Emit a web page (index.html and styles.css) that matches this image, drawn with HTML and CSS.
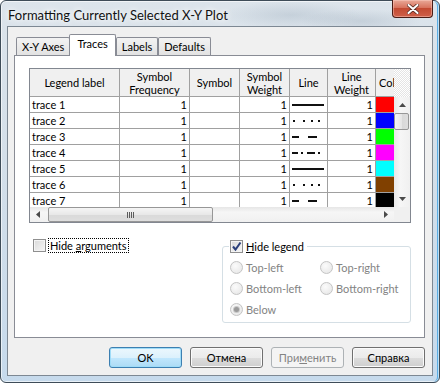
FILE: index.html
```html
<!DOCTYPE html>
<html>
<head>
<meta charset="utf-8">
<title>Formatting Currently Selected X-Y Plot</title>
<link rel="stylesheet" href="styles.css">
</head>
<body>
<div class="window">
  <div class="titlebar">
    <span class="title">Formatting Currently Selected X-Y Plot</span>
    <div class="close">
      <svg width="12" height="10" viewBox="0 0 12 10">
        <path d="M1.5 1 L10.5 9 M10.5 1 L1.5 9" stroke="#5a2a22" stroke-width="3.6" stroke-linecap="round"/>
        <path d="M1.5 1 L10.5 9 M10.5 1 L1.5 9" stroke="#fff" stroke-width="2" stroke-linecap="round"/>
      </svg>
    </div>
  </div>

  <div class="client">
    <div class="tabs">
      <div class="tab">X-Y Axes</div>
      <div class="tab active">Traces</div>
      <div class="tab">Labels</div>
      <div class="tab">Defaults</div>
    </div>

    <div class="page">
      <div class="grid">
        <div class="grid-main">
          <div class="grid-view">
            <table class="traces">
              <colgroup>
                <col style="width:90px"><col style="width:70px"><col style="width:50px"><col style="width:50px">
                <col style="width:38px"><col style="width:48px"><col style="width:60px">
              </colgroup>
              <thead>
                <tr>
                  <th>Legend label</th>
                  <th>Symbol<br>Frequency</th>
                  <th>Symbol</th>
                  <th>Symbol<br>Weight</th>
                  <th>Line</th>
                  <th>Line<br>Weight</th>
                  <th class="col-head">Col</th>
                </tr>
              </thead>
              <tbody>
                <tr>
                  <td>trace 1</td><td class="num">1</td><td></td><td class="num">1</td>
                  <td class="line"><svg width="34" height="2"><rect width="32" height="2"/></svg></td>
                  <td class="num">1</td><td class="swatch red"></td>
                </tr>
                <tr>
                  <td>trace 2</td><td class="num">1</td><td></td><td class="num">1</td>
                  <td class="line"><svg width="34" height="2"><rect x="1" width="2" height="2"/><rect x="11" width="2" height="2"/><rect x="19" width="2" height="2"/><rect x="26" width="2" height="2"/></svg></td>
                  <td class="num">1</td><td class="swatch blue"></td>
                </tr>
                <tr>
                  <td>trace 3</td><td class="num">1</td><td></td><td class="num">1</td>
                  <td class="line"><svg width="34" height="2"><rect width="7" height="2"/><rect x="16" width="9" height="2"/></svg></td>
                  <td class="num">1</td><td class="swatch green"></td>
                </tr>
                <tr>
                  <td>trace 4</td><td class="num">1</td><td></td><td class="num">1</td>
                  <td class="line"><svg width="34" height="2"><rect width="6" height="2"/><rect x="9" width="2" height="2"/><rect x="15" width="8" height="2"/><rect x="26" width="2" height="2"/></svg></td>
                  <td class="num">1</td><td class="swatch magenta"></td>
                </tr>
                <tr>
                  <td>trace 5</td><td class="num">1</td><td></td><td class="num">1</td>
                  <td class="line"><svg width="34" height="2"><rect width="32" height="2"/></svg></td>
                  <td class="num">1</td><td class="swatch cyan"></td>
                </tr>
                <tr>
                  <td>trace 6</td><td class="num">1</td><td></td><td class="num">1</td>
                  <td class="line"><svg width="34" height="2"><rect x="1" width="2" height="2"/><rect x="11" width="2" height="2"/><rect x="19" width="2" height="2"/><rect x="26" width="2" height="2"/></svg></td>
                  <td class="num">1</td><td class="swatch brown"></td>
                </tr>
                <tr>
                  <td>trace 7</td><td class="num">1</td><td></td><td class="num">1</td>
                  <td class="line"><svg width="34" height="2"><rect width="7" height="2"/><rect x="16" width="9" height="2"/></svg></td>
                  <td class="num">1</td><td class="swatch black"></td>
                </tr>
              </tbody>
            </table>
          </div>
          <div class="vscroll">
            <div class="vs-head"></div>
            <div class="sb-btn"><svg width="7" height="4"><polygon points="0,4 7,4 3.5,0"/></svg></div>
            <div class="vs-thumb"></div>
            <div class="vs-track"></div>
            <div class="sb-btn"><svg width="7" height="4"><polygon points="0,0 7,0 3.5,4"/></svg></div>
          </div>
        </div>
        <div class="grid-foot">
          <div class="hscroll">
            <div class="sb-btn"><svg width="4" height="7"><polygon points="4,0 4,7 0,3.5"/></svg></div>
            <div class="hs-thumb"><span class="grip"></span></div>
            <div class="hs-track"></div>
            <div class="sb-btn"><svg width="4" height="7"><polygon points="0,0 0,7 4,3.5"/></svg></div>
          </div>
          <div class="corner"></div>
        </div>
      </div>

      <div class="options">
        <label class="check args">
          <span class="box"></span>
          <span class="focus">Hide <u>a</u>rguments</span>
        </label>
        <fieldset class="group">
          <legend>
            <label class="check">
              <span class="box">
                <svg width="11" height="11" viewBox="0 0 11 11"><path d="M2 5.5 L4.5 8.5 L9.5 1.5" fill="none" stroke="#2b3f7a" stroke-width="2"/></svg>
              </span>
              <span><u>H</u>ide legend</span>
            </label>
          </legend>
          <div class="radios">
            <label class="radio"><span class="dot"></span>Top-left</label>
            <label class="radio"><span class="dot"></span>Top-right</label>
            <label class="radio"><span class="dot"></span>Bottom-left</label>
            <label class="radio"><span class="dot"></span>Bottom-right</label>
            <label class="radio"><span class="dot on"></span>Below</label>
          </div>
        </fieldset>
      </div>
    </div>

    <div class="buttons">
      <button class="btn default">OK</button>
      <button class="btn">Отмена</button>
      <button class="btn" disabled>При<u>м</u>енить</button>
      <button class="btn">Справка</button>
    </div>
  </div>
</div>
</body>
</html>
```

FILE: styles.css
```css
body {
    margin: 0;
    font-family: Lato, "Open Sans", "Noto Sans", sans-serif;
    font-size: 11px;
    color: #000;
    background: #fff;
}

.window {
    box-sizing: border-box;
    width: 440px;
    height: 383px;
    display: flex;
    flex-direction: column;
    padding: 0 6px 6px;
    border: 1px solid #3e4c58;
    border-radius: 6px;
    background:
        radial-gradient(ellipse 70px 14px at 290px 14px, rgba(120, 140, 160, .22), transparent),
        radial-gradient(ellipse 60px 12px at 360px 20px, rgba(110, 130, 150, .2), transparent),
        linear-gradient(#dce4eb, #d4dfe9 40%, #c6daec 100%);
    box-shadow: inset 0 0 0 1px rgba(255, 255, 255, .6), inset -2px 0 0 #5aaee6;
}

/* title bar */
.titlebar {
    height: 25px;
    display: flex;
    align-items: center;
}
.title {
    font-size: 13px;
    margin: 3px 0 0 1px;
    color: #111;
    text-shadow: 0 0 5px #fff, 0 0 8px #fff;
}
.close {
    margin-left: auto;
    align-self: flex-start;
    box-sizing: border-box;
    width: 41px;
    height: 18px;
    margin-top: -1px;
    border: 1px solid #4a1c15;
    border-top: none;
    border-radius: 0 0 4px 4px;
    background: linear-gradient(#e9a998, #d8735e 45%, #c34a32 50%, #cf6049);
    box-shadow: inset 0 0 0 1px rgba(255, 210, 200, .45);
    display: flex;
    align-items: center;
    justify-content: center;
}

/* client area */
.client {
    flex: 1;
    display: flex;
    flex-direction: column;
    background: #f0f0f0;
    border: 1px solid #7d8893;
    padding: 7px 7px 0 6px;
}

.tabs {
    display: flex;
    align-items: flex-end;
    height: 21px;
    padding-left: 2px;
    position: relative;
    z-index: 1;
}
.tab {
    box-sizing: border-box;
    height: 18px;
    padding: 1px 5px 0;
    line-height: 16px;
    border: 1px solid #898c95;
    border-bottom: none;
    border-radius: 2px 2px 0 0;
    background: linear-gradient(#f3f3f3, #e2e2e2);
}
.tab.active {
    height: 22px;
    margin: 0 0 -1px -1px;
    padding: 1px 7px 0;
    background: #fff;
    border-color: #898c95;
}

.page {
    box-sizing: border-box;
    height: 283px;
    border: 1px solid #898c95;
    background: #fff;
    padding: 12px 13px 0 14px;
}

/* data grid */
.grid {
    box-sizing: border-box;
    width: 382px;
    height: 155px;
    border: 1px solid #828790;
}
.grid-main {
    display: flex;
    height: 138px;
}
.grid-view {
    width: 364px;
    overflow: hidden;
}
.traces {
    width: 406px;
    table-layout: fixed;
    border-spacing: 0;
}
.traces th {
    height: 27px;
    padding: 0;
    line-height: 13px;
    font-weight: normal;
    background: #f0f0f0;
    border-right: 1px solid #a0a0a0;
    border-bottom: 1px solid #a0a0a0;
    white-space: nowrap;
}
.traces th.col-head {
    text-align: left;
    padding-left: 3px;
}
.traces td {
    height: 15px;
    padding: 0 2px;
    line-height: 15px;
    border-right: 1px solid #a0a0a0;
    border-bottom: 1px solid #a0a0a0;
    white-space: nowrap;
    overflow: hidden;
}
.traces td.num {
    text-align: right;
}
.traces td.line svg {
    display: block;
    fill: #111;
}
.traces td.swatch {
    padding: 0;
}
.red { background: #ff0000; }
.blue { background: #0000ff; }
.green { background: #00ff00; }
.magenta { background: #ff00ff; }
.cyan { background: #00ffff; }
.brown { background: #804000; }
.black { background: #000; }

/* scroll bars */
.vscroll {
    width: 16px;
    display: flex;
    flex-direction: column;
    background: linear-gradient(to right, #e8e8e8, #f6f6f6 40%, #f0f0f0);
}
.vs-head {
    height: 28px;
    background: repeating-conic-gradient(#fff 0 25%, #e4e4e4 0 50%) 0 0 / 2px 2px;
}
.sb-btn {
    flex: none;
    width: 16px;
    height: 16px;
    display: flex;
    align-items: center;
    justify-content: center;
    fill: #4a4a4a;
}
.vs-thumb {
    box-sizing: border-box;
    height: 17px;
    margin: 0 1px 0 0;
    border: 1px solid #979797;
    border-radius: 2px;
    background: linear-gradient(to right, #f5f5f5, #e6e6e6 50%, #d8d8d8 51%, #dedede);
}
.vs-track {
    flex: 1;
}

.grid-foot {
    display: flex;
    height: 15px;
}
.hscroll {
    width: 364px;
    display: flex;
    align-items: center;
    background: linear-gradient(#e6e6e6, #f6f6f6 35%, #f0f0f0);
}
.hscroll .sb-btn {
    height: 15px;
}
.hs-thumb {
    box-sizing: border-box;
    width: 165px;
    height: 15px;
    margin-left: 2px;
    border: 1px solid #979797;
    border-radius: 2px;
    background: linear-gradient(#f5f5f5, #e8e8e8 50%, #d9d9d9 51%, #dedede);
    display: flex;
    align-items: center;
    justify-content: center;
}
.grip {
    width: 7px;
    height: 6px;
    background: repeating-linear-gradient(to right, #5c5c5c 0 1px, transparent 1px 2px);
}
.hs-track {
    flex: 1;
}
.corner {
    flex: 1;
    background: #f0f0f0;
}

/* options below the grid */
.options {
    display: flex;
    align-items: flex-start;
    margin-top: 15px;
}
.check {
    display: flex;
    align-items: center;
    height: 15px;
    line-height: 13px;
}
.box {
    box-sizing: border-box;
    width: 13px;
    height: 13px;
    margin-right: 3px;
    border: 1px solid #8f8f8f;
    background: linear-gradient(135deg, #d9d9d9, #f7f7f7);
    box-shadow: inset 0 0 0 1px #f4f4f4;
    display: flex;
    align-items: center;
    justify-content: center;
}
.args {
    margin-left: 4px;
}
.args .box {
    margin-right: 2px;
}
.focus {
    padding: 0 1px;
    border: 1px dotted #000;
}

.group {
    box-sizing: border-box;
    width: 189px;
    margin: 1px 0 0 auto;
    padding: 0 0 2px 6px;
    border: 1px solid #d5dfe5;
    border-radius: 3px;
}
.group legend {
    padding: 0 3px 0 1px;
}
.radios {
    display: grid;
    grid-template-columns: 90px 1fr;
    grid-auto-rows: 21px;
    margin-top: 3px;
}
.radio {
    display: flex;
    align-items: center;
    padding-left: 1px;
    color: #838383;
}
.dot {
    box-sizing: border-box;
    width: 13px;
    height: 13px;
    margin-right: 3px;
    border: 1px solid #c4c4c4;
    border-radius: 50%;
    background: radial-gradient(circle at 40% 35%, #fbfbfb, #e4e4e4);
    display: flex;
    align-items: center;
    justify-content: center;
}
.dot.on::after {
    content: "";
    width: 5px;
    height: 5px;
    border-radius: 50%;
    background: #9a9a9a;
    box-shadow: 0 0 0 1px #c8c8c8;
}

/* dialog buttons */
.buttons {
    display: flex;
    justify-content: flex-end;
    gap: 8px;
    margin-top: 9px;
}
.btn {
    box-sizing: border-box;
    width: 73px;
    height: 21px;
    padding: 0;
    font: inherit;
    font-weight: normal;
    color: #000;
    border: 1px solid #707070;
    border-radius: 3px;
    background: linear-gradient(#f2f2f2, #ebebeb 50%, #dddddd 51%, #cfcfcf);
    box-shadow: inset 0 0 0 1px #fbfbfb;
}
.btn.default {
    border-color: #3c7fb1;
    background: linear-gradient(#ecf7fd, #dcf1fc 50%, #c1e7fd 51%, #acdbf5);
    box-shadow: inset 0 0 0 1px #9fdcf8;
}
.btn:disabled {
    color: #838383;
    border-color: #adb2b5;
    background: #f4f4f4;
    box-shadow: none;
}
```
